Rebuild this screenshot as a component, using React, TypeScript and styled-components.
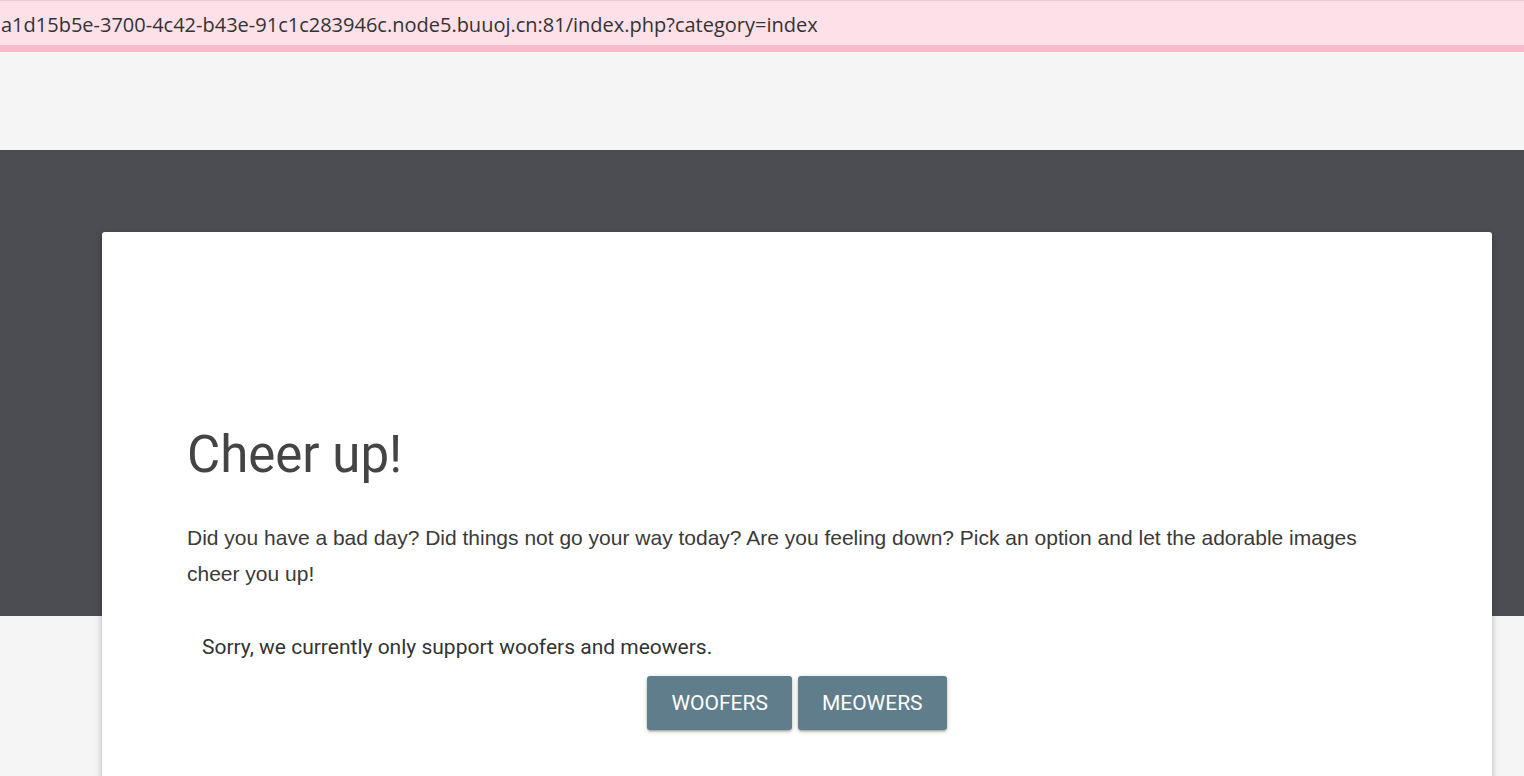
import React from 'react'
import styled, { createGlobalStyle } from 'styled-components'

const GlobalStyle = createGlobalStyle`
  html, body {
    margin: 0;
    padding: 0;
    background: #f5f5f5;
  }
  body {
    font-family: Roboto, "Liberation Sans", sans-serif;
    overflow: hidden;
  }
`

const AddressBar = styled.div`
  height: 52px;
  background: #fde0e8;
  border-top: 1px solid #f0c8d4;
  border-bottom: 6px solid #fbb9cc;
  box-shadow: inset 0 -1px 0 #e9c3ce;
  display: flex;
  align-items: center;
  padding: 2px 0 0 1px;
  box-sizing: border-box;
  font-family: "Open Sans", "Noto Sans", sans-serif;
  font-size: 20px;
  color: #333;
  white-space: nowrap;
`

const Page = styled.main`
  min-height: 724px;
  padding: 180px 32px 0 102px;
  background: linear-gradient(
    to bottom,
    #f5f5f5 0,
    #f5f5f5 98px,
    #4b4d52 98px,
    #4b4d52 564px,
    #f5f5f5 564px
  );
  box-sizing: border-box;
`

const Card = styled.section`
  background: #fff;
  border-radius: 3px;
  box-shadow: 0 2px 5px 0 rgba(0, 0, 0, 0.16), 0 2px 10px 0 rgba(0, 0, 0, 0.12);
  padding: 194px 85px 60px 85px;
  min-height: 600px;
  box-sizing: border-box;
`

const Title = styled.h2`
  margin: 0 0 37px;
  font-family: Roboto, sans-serif;
  font-weight: 400;
  font-size: 51px;
  line-height: 57px;
  color: #444;
`

const Lead = styled.p`
  margin: 0 0 43px;
  font-family: "Liberation Sans", Arial, sans-serif;
  font-size: 21px;
  line-height: 36px;
  color: #3a3a3a;
`

const Notice = styled.p`
  margin: 0 0 17px 15px;
  font-family: Roboto, sans-serif;
  font-size: 21px;
  line-height: 24px;
  color: #333;
`

const Actions = styled.div`
  display: flex;
  justify-content: center;
  gap: 6px;
`

const Button = styled.button`
  height: 54px;
  padding: 0 24px;
  border: none;
  border-radius: 3px;
  background: #607d8b;
  color: #fff;
  font-family: Roboto, sans-serif;
  font-size: 21px;
  text-transform: uppercase;
  cursor: pointer;
  box-shadow: 0 2px 2px 0 rgba(0, 0, 0, 0.14), 0 3px 1px -2px rgba(0, 0, 0, 0.12),
    0 1px 5px 0 rgba(0, 0, 0, 0.2);
`

export default function App() {
  return (
    <>
      <GlobalStyle />
      <AddressBar>a1d15b5e-3700-4c42-b43e-91c1c283946c.node5.buuoj.cn:81/index.php?category=index</AddressBar>
      <Page>
        <Card>
          <Title>Cheer up!</Title>
          <Lead>
            Did you have a bad day? Did things not go your way today? Are you feeling down? Pick an option and let
            the adorable images cheer you up!
          </Lead>
          <Notice>Sorry, we currently only support woofers and meowers.</Notice>
          <Actions>
            <Button>woofers</Button>
            <Button>meowers</Button>
          </Actions>
        </Card>
      </Page>
    </>
  )
}
